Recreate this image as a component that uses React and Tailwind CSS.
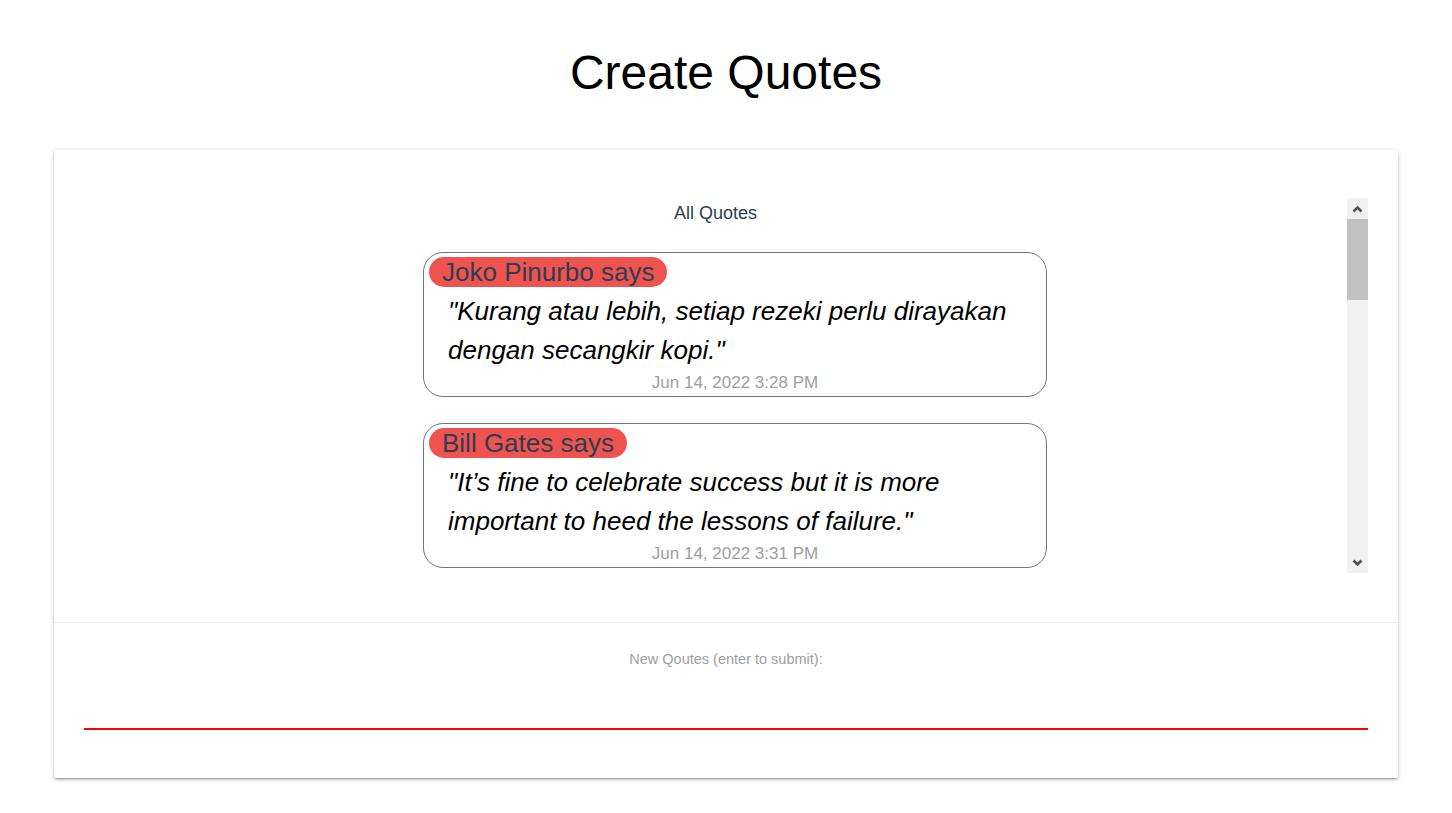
import React from 'react'

const quotes = [
  { author: 'Joko Pinurbo', text: 'Kurang atau lebih, setiap rezeki perlu dirayakan dengan secangkir kopi.', date: 'Jun 14, 2022 3:28 PM' },
  { author: 'Bill Gates', text: 'It’s fine to celebrate success but it is more important to heed the lessons of failure.', date: 'Jun 14, 2022 3:31 PM' },
  { author: 'Steve Jobs', text: 'Stay hungry, stay foolish.', date: 'Jun 14, 2022 3:35 PM' },
  { author: 'Albert Einstein', text: 'Life is like riding a bicycle. To keep your balance you must keep moving.', date: 'Jun 14, 2022 3:40 PM' },
  { author: 'Pramoedya Ananta Toer', text: 'Menulis adalah bekerja untuk keabadian.', date: 'Jun 14, 2022 3:44 PM' },
]

const Chevron = ({ up }) => (
  <svg width="11" height="8" viewBox="0 0 11 8">
    <polyline
      points={up ? '1.5,6.5 5.5,2.5 9.5,6.5' : '1.5,1.5 5.5,5.5 9.5,1.5'}
      fill="none"
      stroke="#505050"
      strokeWidth="2.6"
    />
  </svg>
)

const QuoteCard = ({ q }) => (
  <div className="w-[624px] ml-[339px] mb-[26px] border border-[#757575] rounded-[20px] pt-[4px] text-left">
    <span className="inline-block ml-[5px] px-[13px] h-[30px] leading-[30px] rounded-full bg-[#ef5350] text-[26px] text-[#2c3e50]">
      {q.author} says
    </span>
    <p className="mt-[4px] px-[24px] italic text-[26px] leading-[39px] text-black">"{q.text}"</p>
    <p className="text-center text-[17px] leading-[26px] text-[#9e9e9e]">{q.date}</p>
  </div>
)

const App = () => {
  return (
    <div className="min-h-screen bg-white font-['Liberation_Sans',Arial,sans-serif] pt-[45px] pb-[35px]">
      <h1 className="text-center text-[48px] leading-[56px] text-black mb-[49px]">Create Quotes</h1>

      <div className="mx-[54px] bg-white rounded-[2px] shadow-[0_2px_2px_0_rgba(0,0,0,0.14),0_3px_1px_-2px_rgba(0,0,0,0.12),0_1px_5px_0_rgba(0,0,0,0.2)]">
        <div className="pt-[48px] px-[30px] pb-[49px]">
          <div className="flex h-[375px]">
            <div className="flex-1 overflow-hidden text-center">
              <p className="mt-[2px] text-[18px] leading-[27px] text-[#2c3e50] mb-[25px]">All Quotes</p>
              {quotes.map((q) => (
                <QuoteCard key={q.date} q={q} />
              ))}
            </div>

            {/* scrollbar */}
            <div className="w-[21px] flex flex-col bg-[#f1f1f1]">
              <div className="h-[21px] flex items-center justify-center">
                <Chevron up />
              </div>
              <div className="h-[81px] bg-[#c1c1c1]" />
              <div className="flex-1" />
              <div className="h-[21px] flex items-center justify-center">
                <Chevron />
              </div>
            </div>
          </div>
        </div>

        <div className="border-t border-[#ebebeb] pt-[26px] px-[30px] pb-[48px]">
          <p className="text-center text-[14.5px] leading-[21px] text-[#9e9e9e]">New Qoutes (enter to submit):</p>
          <input
            type="text"
            className="block w-full h-[60px] bg-transparent border-0 border-b-2 border-[#ff0000] outline-none text-[16px]"
          />
        </div>
      </div>
    </div>
  )
}

export default App
